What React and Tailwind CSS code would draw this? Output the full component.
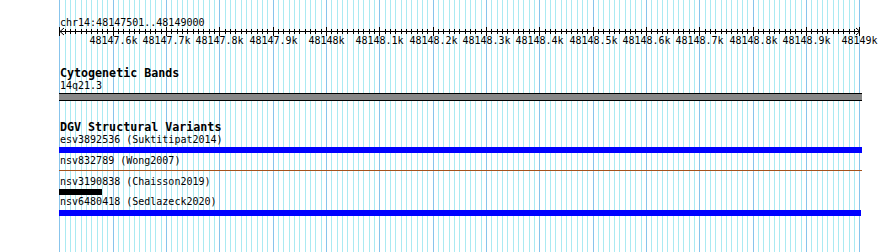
import React from 'react';

// ruler/grid geometry: 1500bp drawn across 800px, a line every 10bp
const ORIGIN = 59.47;
const STEP = 5.3333;
const LINES = Array.from({ length: 151 }, (_, k) => ({ x: Math.round(ORIGIN + STEP * k) + 0.5, major: k % 10 === 0 }));

const TICK_LABELS = [
  '48147.6k', '48147.7k', '48147.8k', '48147.9k', '48148k', '48148.1k', '48148.2k',
  '48148.3k', '48148.4k', '48148.5k', '48148.6k', '48148.7k', '48148.8k', '48148.9k', '48149k',
];

const Grid = () => (
  <svg className="absolute inset-0" width="890" height="252" shapeRendering="crispEdges">
    {LINES.map((l, i) => (
      <line key={i} x1={l.x} x2={l.x} y1="0" y2="252" stroke={l.major ? '#88c4ec' : '#aaeaf2'} strokeWidth="1" />
    ))}
  </svg>
);

const Ruler = () => (
  <svg width="890" height="22" className="block -ml-[60px] -mt-[2px]" shapeRendering="crispEdges">
    <line x1="60" x2="860" y1="5.5" y2="5.5" stroke="#000" />
    {LINES.map((l, i) => (
      <line key={i} x1={l.x} x2={l.x} y1={l.major ? 1 : 3} y2={l.major ? 10 : 8} stroke="#000" />
    ))}
    <polyline points="64,2 60,5.5 64,9" fill="none" stroke="#000" shapeRendering="auto" />
    <polyline points="856,2 860,5.5 856,9" fill="none" stroke="#000" shapeRendering="auto" />
    {TICK_LABELS.map((t, i) => (
      <text key={t} x={LINES[(i + 1) * 10].x} y="18" textAnchor="middle" fontSize="10" fontFamily="'DejaVu Sans Mono', monospace" fill="#000">
        {t}
      </text>
    ))}
  </svg>
);

const Label = ({ children, className = '' }) => (
  <div className={`h-[10px] leading-[10px] whitespace-pre ${className}`}>{children}</div>
);

const Title = ({ children, className = '' }) => (
  <div className={`h-[12px] leading-[12px] font-bold text-[11.67px] whitespace-pre ${className}`}>{children}</div>
);

const App = () => {
  return (
    <div className="relative w-[890px] h-[252px] bg-white overflow-hidden text-black text-[10px] font-['DejaVu_Sans_Mono',monospace]">
      <Grid />
      <div className="relative flex flex-col pl-[60px] pt-[18px]">
        <Label>chr14:48147501..48149000</Label>
        <Ruler />

        <Title className="mt-[19px]">Cytogenetic Bands</Title>
        <Label className="mt-[2px]">14q21.3</Label>
        <div className="mt-[2px] -ml-px w-[803px] h-[8px] bg-[#888888] border-y border-black" />

        <Title className="mt-[20px]">DGV Structural Variants</Title>
        <Label className="mt-[2px]">esv3892536 (Suktitipat2014)</Label>
        <div className="mt-[2px] -ml-px w-[803px] h-[6px] bg-[#0000ff]" />
        <Label className="mt-[3px]">nsv832789 (Wong2007)</Label>
        <div className="mt-[4px] -ml-px w-[803px] h-px bg-[#a4521c]" />
        <Label className="mt-[6px]">nsv3190838 (Chaisson2019)</Label>
        <div className="mt-[2px] -ml-px w-[43px] h-[6px] bg-black" />
        <Label className="mt-[2px]">nsv6480418 (Sedlazeck2020)</Label>
        <div className="mt-[3px] -ml-px w-[802px] h-[6px] bg-[#0000ff]" />
      </div>
    </div>
  );
};

export default App;
